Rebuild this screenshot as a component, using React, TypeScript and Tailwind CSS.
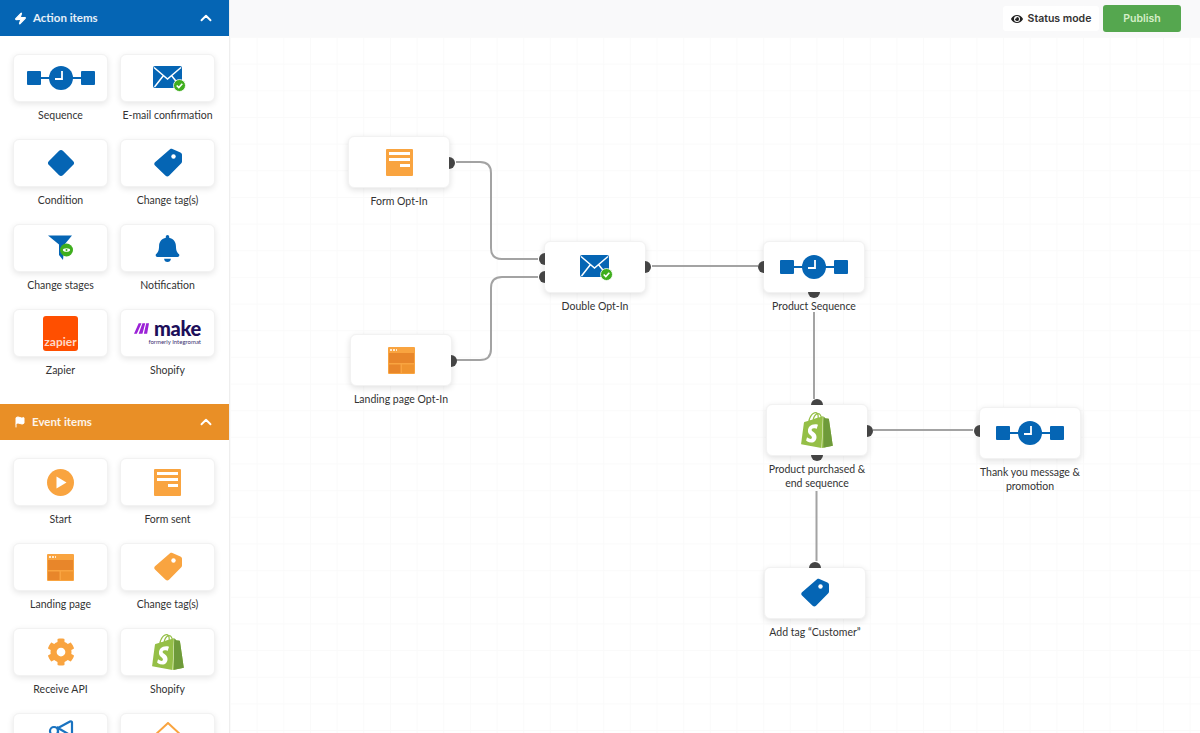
import React from 'react';
import { ChevronUp, Flag, Zap } from 'lucide-react';
import { FaBell, FaCog, FaEye } from 'react-icons/fa';
import { SiShopify } from 'react-icons/si';

const BLUE = '#0565B4';
const ORANGE = '#F9A440';

function SequenceIcon() {
  return (
    <svg width="68" height="24" viewBox="0 0 68 24">
      <rect x="0" y="5" width="14" height="14" rx="1" fill={BLUE} />
      <rect x="54" y="5" width="14" height="14" rx="1" fill={BLUE} />
      <path d="M14 12H54" stroke={BLUE} strokeWidth="1.8" />
      <circle cx="34" cy="12" r="12" fill={BLUE} />
      <path d="M35 5V13H28" stroke="#fff" strokeWidth="1.8" fill="none" />
    </svg>
  );
}

function MailIcon() {
  return (
    <svg className="mt-[2px] ml-[3px]" width="33" height="26" viewBox="0 0 33 26">
      <rect x="0" y="0" width="29" height="22" rx="2" fill={BLUE} />
      <path d="M1 1.5L14.5 13L28 1.5M1.5 21L10.5 9.5M27.5 21L18.5 9.5" stroke="#fff" strokeWidth="1.5" fill="none" />
      <circle cx="26.5" cy="19.5" r="6" fill="#3FAE1E" stroke="#fff" strokeWidth="0.8" />
      <path d="M23.7 19.5L25.8 21.6L29.3 17.7" stroke="#fff" strokeWidth="1.6" fill="none" />
    </svg>
  );
}

function DiamondIcon() {
  return (
    <svg width="30" height="30" viewBox="0 0 30 30">
      <rect x="5" y="5" width="20" height="20" rx="3" fill={BLUE} transform="rotate(45 15 15)" />
    </svg>
  );
}

function TagIcon({ color }: { color: string }) {
  return (
    <svg width="30" height="30" viewBox="0 0 30 30">
      <path
        d="M17 1.2C17.8 0.8 18.6 0.8 19.4 1L27.4 4.6C28.4 5 29 5.9 29 7V13.5C29 14.2 28.7 14.8 28.3 15.2L16 27.8C15 28.8 13.6 28.8 12.6 27.8L2 17.6C1 16.6 1 15.2 2 14.2Z"
        fill={color}
      />
      <circle cx="20.5" cy="8.5" r="2.2" fill="#fff" />
    </svg>
  );
}

function FunnelIcon() {
  return (
    <svg width="26" height="26" viewBox="0 0 26 26">
      <path d="M0 0.5H24L16.5 9.5L15 25L11 20V9.5Z" fill={BLUE} />
      <circle cx="18.5" cy="15" r="6.5" fill="#3FAE1E" />
      <ellipse cx="18.5" cy="15" rx="3.6" ry="1.8" fill="#fff" />
      <circle cx="18.5" cy="15" r="1" fill="#3FAE1E" />
    </svg>
  );
}

function PlayIcon() {
  return (
    <svg width="27" height="27" viewBox="0 0 27 27">
      <circle cx="13.5" cy="13.5" r="13.5" fill={ORANGE} />
      <path d="M9.5 7.5L19.5 13.5L9.5 19.5Z" fill="#fff" />
    </svg>
  );
}

function FormIcon() {
  return (
    <svg width="27" height="27" viewBox="0 0 27 27">
      <rect width="27" height="27" rx="1" fill={ORANGE} />
      <rect x="3" y="3" width="21" height="3" fill="#fff" />
      <rect x="3" y="9" width="21" height="3" fill="#fff" />
      <rect x="14" y="15" width="10" height="3" fill="#fff" />
    </svg>
  );
}

function LandingIcon() {
  return (
    <svg width="27" height="27" viewBox="0 0 27 27">
      <rect width="27" height="27" rx="1" fill={ORANGE} />
      <rect x="1" y="6" width="25" height="10" fill="#E8862A" />
      <rect x="1" y="17.5" width="11.5" height="8.5" fill="#E8862A" />
      <rect x="14" y="17.5" width="12" height="8.5" fill="#F0942F" />
      <path d="M2 3H9" stroke="#fff" strokeWidth="1.4" strokeDasharray="2 1" />
    </svg>
  );
}

function ZapierIcon() {
  return (
    <div className="flex h-[35px] w-[35px] items-end justify-center rounded-[3px] bg-[#FF4F00] pb-[2px] text-[12px] leading-[14px] font-bold text-[#ffd9c7]">
      zapier
    </div>
  );
}

function MakeIcon() {
  return (
    <div className="flex flex-col items-end leading-none">
      <div className="flex items-center gap-[5px]">
        <svg width="15" height="11" viewBox="0 0 16 11">
          <path d="M0 11L5 0H8L3 11ZM5 11L9 0H12L9 11ZM10.5 11L13 0H16L14 11Z" fill="#9B22D6" />
        </svg>
        <span className="text-[20px] leading-[17px] font-black tracking-[-0.3px] text-[#1D0F5A]">make</span>
      </div>
      <span className="text-[6px] leading-[9px] text-[#3b3170]">formerly Integromat</span>
    </div>
  );
}

function ShopifyIcon() {
  return (
    <span className="relative block h-[36px] w-[36px]">
      <SiShopify size={36} color="#95BF47" />
      <SiShopify size={36} color="#6E9A3A" className="absolute inset-0 [clip-path:polygon(68%_0,100%_0,100%_100%,68%_100%)]" />
    </span>
  );
}

function BlueCutIcon() {
  return (
    <svg className="-mt-[8px]" width="26" height="26" viewBox="0 0 26 26">
      <circle cx="6" cy="11" r="4" stroke="#1A73C0" strokeWidth="2.2" fill="none" />
      <path d="M10 8L22 1.5C23 1 24 1.5 24 2.5V14C24 15 23 15.5 22 15L10 8V22" stroke="#1A73C0" strokeWidth="2.2" fill="none" />
    </svg>
  );
}

function OrangeCutIcon() {
  return (
    <svg className="-mt-[4px]" width="30" height="26" viewBox="0 0 30 26">
      <path d="M1 14L15 1L29 14V26M1 14V26" stroke={ORANGE} strokeWidth="2" fill="none" />
    </svg>
  );
}

const actionItems: [string, React.ReactNode][] = [
  ['Sequence', <SequenceIcon />],
  ['E-mail confirmation', <MailIcon />],
  ['Condition', <DiamondIcon />],
  ['Change tag(s)', <TagIcon color={BLUE} />],
  ['Change stages', <FunnelIcon />],
  ['Notification', <FaBell size={27} color={BLUE} />],
  ['Zapier', <ZapierIcon />],
  ['Shopify', <MakeIcon />],
];

const eventItems: [string, React.ReactNode][] = [
  ['Start', <PlayIcon />],
  ['Form sent', <FormIcon />],
  ['Landing page', <LandingIcon />],
  ['Change tag(s)', <TagIcon color={ORANGE} />],
  ['Receive API', <FaCog size={28} color={ORANGE} />],
  ['Shopify', <ShopifyIcon />],
  ['', <BlueCutIcon />],
  ['', <OrangeCutIcon />],
];

function SectionHeader({ title, color, icon }: { title: string; color: string; icon: React.ReactNode }) {
  return (
    <div className={`flex h-9 items-center justify-between pr-[14px] pl-[14px] ${color}`}>
      <div className="flex items-center gap-[6px] text-[11.5px] font-bold text-white/90">
        {icon}
        <span>{title}</span>
      </div>
      <ChevronUp size={18} color="#fff" strokeWidth={2.5} />
    </div>
  );
}

function ItemGrid({ items }: { items: [string, React.ReactNode][] }) {
  return (
    <div className="grid grid-cols-[95px_95px] gap-x-3 px-[13px] pt-[18px] pb-[10px]">
      {items.map(([label, icon], i) => (
        <div key={i} className="h-[85px]">
          <div className="flex h-[48px] items-center justify-center rounded-md border border-[#f2f2f2] bg-white shadow-[0_2px_6px_rgba(0,0,0,0.1)]">
            {icon}
          </div>
          <div className="mt-[6px] text-center text-[10.5px] leading-[14px] whitespace-nowrap text-[#333]">{label}</div>
        </div>
      ))}
    </div>
  );
}

function Node({ className, label, icon, children }: { className: string; label: React.ReactNode; icon: React.ReactNode; children?: React.ReactNode }) {
  return (
    <div className={`absolute flex w-[102px] flex-col items-center ${className}`}>
      <div className="relative flex h-[52px] w-full items-center justify-center rounded-md border border-[#f2f2f2] bg-white shadow-[0_2px_6px_rgba(0,0,0,0.12)]">
        {icon}
        {children}
      </div>
      <div className="mt-[6px] text-center text-[10.5px] leading-[14px] whitespace-nowrap text-[#333]">{label}</div>
    </div>
  );
}

const handleRight = 'absolute left-full h-[12px] w-[6px] rounded-r-full bg-[#444]';
const handleLeft = 'absolute right-full h-[12px] w-[6px] rounded-l-full bg-[#444]';
const handleTop = 'absolute bottom-full left-1/2 h-[6px] w-[12px] -translate-x-1/2 rounded-t-full bg-[#444]';
const handleBottom = 'absolute top-full left-1/2 h-[6px] w-[12px] -translate-x-1/2 rounded-b-full bg-[#444]';

export default function App() {
  return (
    <div className="flex h-[733px] w-[1200px] overflow-hidden bg-white font-['Lato',sans-serif]">
      <aside className="h-full w-[230px] shrink-0 overflow-hidden border-r border-[#eeeeee] bg-white">
        <SectionHeader title="Action items" color="bg-[#0565B4]" icon={<Zap size={13} color="#fff" fill="#fff" />} />
        <ItemGrid items={actionItems} />
        <SectionHeader title="Event items" color="bg-[#E98F26]" icon={<Flag size={12} color="#fff" fill="#fff" />} />
        <ItemGrid items={eventItems} />
      </aside>

      <main className="flex min-w-0 flex-1 flex-col">
        <div className="flex h-[37px] items-center justify-end gap-1 bg-[#f9f9fa] pr-[19px]">
          <button className="flex h-[25px] w-[96px] items-center justify-center gap-[5px] rounded-[3px] bg-white font-['Inter',sans-serif] text-[10.5px] font-semibold text-[#333]">
            <FaEye size={12} color="#222" />
            Status mode
          </button>
          <button className="h-[27px] w-[78px] rounded-[3px] bg-[#55A74F] font-['Inter',sans-serif] text-[10.5px] font-semibold text-[#d5efc9]">
            Publish
          </button>
        </div>

        <div className="relative flex-1 bg-white bg-[linear-gradient(#fafafa_1px,transparent_1px),linear-gradient(90deg,#fafafa_1px,transparent_1px)] bg-[size:26.67px_26.67px]">
          <svg className="absolute inset-0" width="970" height="696" fill="none" stroke="#a3a3a3" strokeWidth="2">
            <path d="M226 125H250Q261 125 261 136V211Q261 222 272 222H308" />
            <path d="M226 323H250Q261 323 261 312V251Q261 240 272 240H308" />
            <path d="M422 229H528" />
            <path d="M584 275V362" />
            <path d="M643 393H743" />
            <path d="M586.5 454V524" />
          </svg>

          <Node className="top-[99px] left-[118px]" label="Form Opt-In" icon={<FormIcon />}>
            <span className={`${handleRight} top-[20px]`} />
          </Node>
          <Node className="top-[297px] left-[120px]" label="Landing page Opt-In" icon={<LandingIcon />}>
            <span className={`${handleRight} top-[20px]`} />
          </Node>
          <Node className="top-[204px] left-[314px]" label="Double Opt-In" icon={<MailIcon />}>
            <span className={`${handleLeft} top-[11px]`} />
            <span className={`${handleLeft} top-[29px]`} />
            <span className={`${handleRight} top-[19px]`} />
          </Node>
          <Node className="top-[204px] left-[533px]" label="Product Sequence" icon={<SequenceIcon />}>
            <span className={`${handleLeft} top-[19px]`} />
            <span className={handleBottom} />
          </Node>
          <Node
            className="top-[367px] left-[536px]"
            label={<>Product purchased &amp;<br />end sequence</>}
            icon={<ShopifyIcon />}
          >
            <span className={handleTop} />
            <span className={`${handleRight} top-[20px]`} />
            <span className={handleBottom} />
          </Node>
          <Node
            className="top-[370px] left-[749px]"
            label={<>Thank you message &amp;<br />promotion</>}
            icon={<SequenceIcon />}
          >
            <span className={`${handleLeft} top-[17px]`} />
          </Node>
          <Node className="top-[530px] left-[534px]" label="Add tag “Customer”" icon={<TagIcon color={BLUE} />}>
            <span className={handleTop} />
          </Node>
        </div>
      </main>
    </div>
  );
}
